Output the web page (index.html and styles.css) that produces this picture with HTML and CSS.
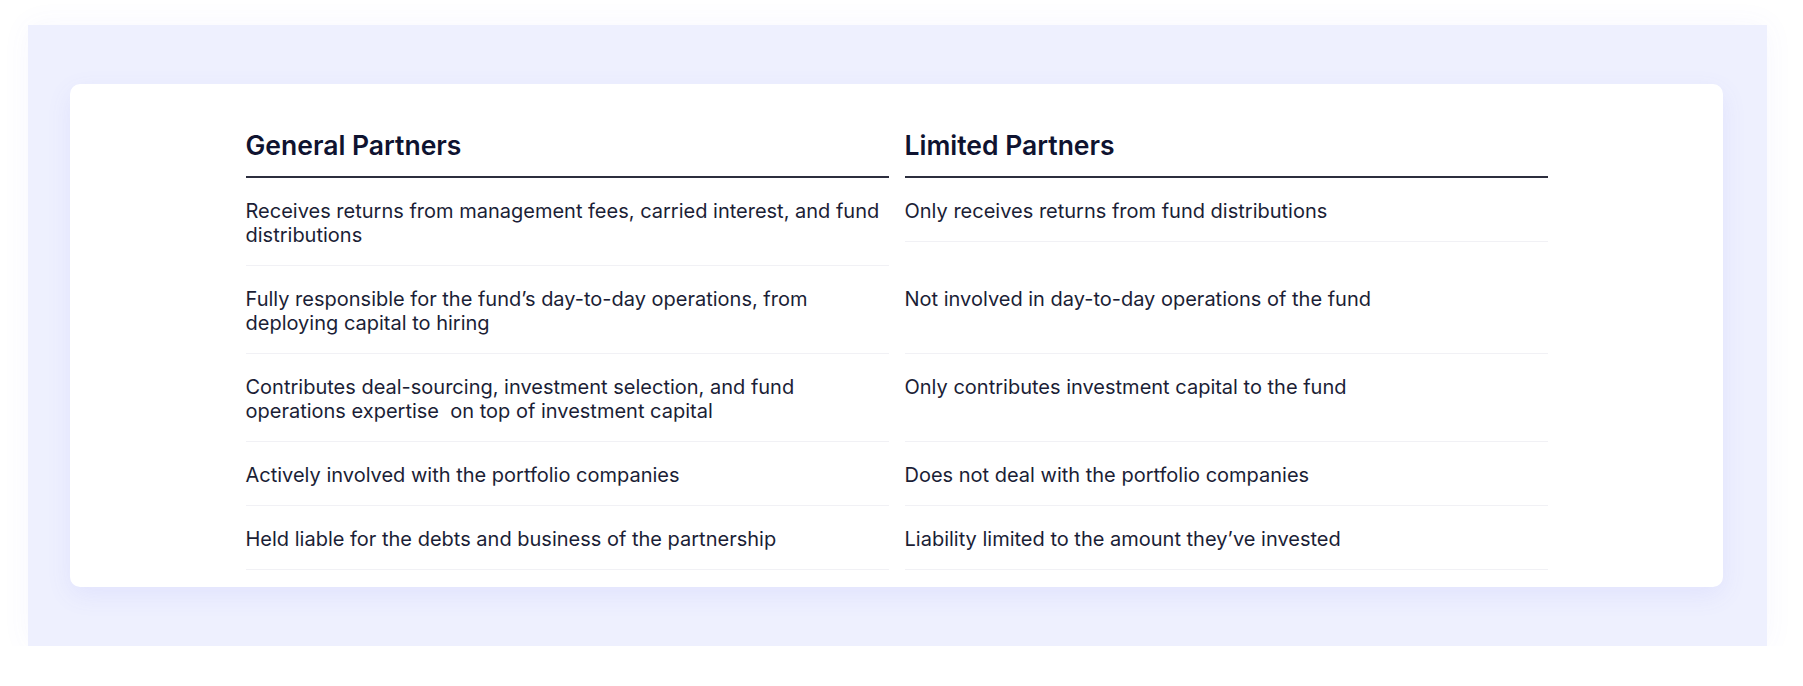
FILE: index.html
```html
<!DOCTYPE html>
<html lang="en">
<head>
<meta charset="utf-8">
<title>General vs Limited Partners</title>
<link rel="stylesheet" href="styles.css">
</head>
<body>
<div class="frame">
  <div class="card">
    <div class="compare">
      <h3 class="col-head">General Partners</h3>
      <h3 class="col-head">Limited Partners</h3>

      <div class="cell">Receives returns from management fees, carried interest, and fund distributions</div>
      <div class="cell cell-top">Only receives returns from fund distributions</div>

      <div class="cell">Fully responsible for the fund’s day-to-day operations, from deploying capital to hiring</div>
      <div class="cell">Not involved in day-to-day operations of the fund</div>

      <div class="cell">Contributes deal-sourcing, investment selection, and fund operations expertise&nbsp; on top of investment capital</div>
      <div class="cell">Only contributes investment capital to the fund</div>

      <div class="cell">Actively involved with the portfolio companies</div>
      <div class="cell">Does not deal with the portfolio companies</div>

      <div class="cell">Held liable for the debts and business of the partnership</div>
      <div class="cell">Liability limited to the amount they’ve invested</div>
    </div>
  </div>
</div>
</body>
</html>
```

FILE: styles.css
```css
* { box-sizing: border-box; }

html, body {
  margin: 0;
  background: #ffffff;
}

body {
  padding: 25px 36px 0 28px;
  font-family: Inter, "Noto Sans", sans-serif;
  color: #1b1e36;
}

.frame {
  background: #eef0fe;
  padding: 59px 44px 59px 42px;
  box-shadow: 0 0 28px rgba(99, 102, 241, 0.05);
}

.card {
  background: #ffffff;
  border-radius: 10px;
  padding: 45px 0 17px;
  box-shadow: 0 8px 26px rgba(99, 102, 241, 0.09);
}

.compare {
  width: 1302px;
  margin: 0 auto;
  display: grid;
  grid-template-columns: 1fr 1fr;
  column-gap: 16px;
}

.col-head {
  margin: 0;
  font-size: 26.5px;
  line-height: 32px;
  font-weight: 600;
  color: #0f1330;
  padding-bottom: 15px;
  border-bottom: 2px solid #2c2e3e;
}

.cell {
  font-size: 20px;
  line-height: 24px;
  padding: 21px 0 18px;
  border-bottom: 1px solid #f1f1f5;
  color: #1b1e36;
}

.cell-top {
  align-self: start;
}
```
